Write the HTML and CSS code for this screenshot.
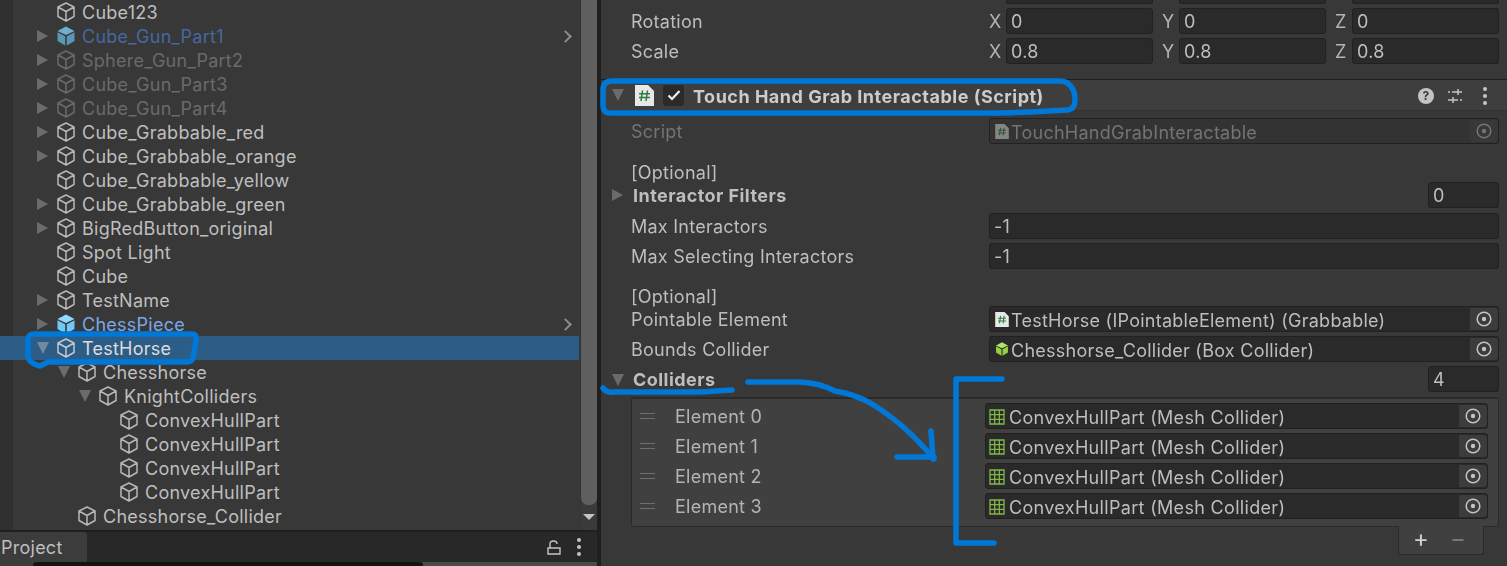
FILE: index.html

```html
<!DOCTYPE html>
<html lang="en">
<head>
  <meta charset="UTF-8">
  <title>Hierarchy and Inspector</title>
  <link rel="stylesheet" href="styles.css">
</head>
<body>
  <svg class="defs" width="0" height="0">
    <symbol id="cube" viewBox="0 0 20 20">
      <path d="M10 1 L18 5 V14.5 L10 19 L2 14.5 V5 Z M2 5 L10 9.5 L18 5 M10 9.5 V19" fill="none" stroke="currentColor" stroke-width="1.5" stroke-linejoin="round"/>
    </symbol>
    <symbol id="cube-solid" viewBox="0 0 20 20">
      <path d="M10 .5 L18.5 5 L10 9 L1.5 5 Z" fill="var(--top)"/>
      <path d="M1.5 6.2 L9.2 10.2 V19.5 L1.5 15 Z M18.5 6.2 L10.8 10.2 V19.5 L18.5 15 Z" fill="var(--side)"/>
    </symbol>
    <symbol id="target" viewBox="0 0 16 16">
      <circle cx="8" cy="8" r="6.8" fill="none" stroke="currentColor" stroke-width="1.5"/>
      <circle cx="8" cy="8" r="2.2" fill="currentColor"/>
    </symbol>
    <symbol id="mesh" viewBox="0 0 16 16">
      <path d="M1 1 H15 V15 H1 Z M1 5.7 H15 M1 10.3 H15 M5.7 1 V15 M10.3 1 V15" fill="none" stroke="#82b84a" stroke-width="1.3"/>
    </symbol>
    <symbol id="script" viewBox="0 0 19 21">
      <path d="M0 0 H13 L19 6 V21 H0 Z" fill="#e8e8e8"/>
      <path d="M7.5 5.5 L6 16 M12.5 5.5 L11 16 M4 8.8 H15 M4 12.6 H15" fill="none" stroke="#2e7d3c" stroke-width="1.5"/>
    </symbol>
  </svg>

  <div class="screen">
    <section class="left">
      <div class="hierarchy">
        <div class="tree">
          <div class="row"><i class="arrow none"></i><svg class="cube"><use href="#cube"/></svg><span>Cube123</span></div>
          <div class="row prefab-dim"><i class="arrow"></i><svg class="cube gun"><use href="#cube-solid"/></svg><span>Cube_Gun_Part1</span><b class="chev"></b></div>
          <div class="row off"><i class="arrow"></i><svg class="cube"><use href="#cube"/></svg><span>Sphere_Gun_Part2</span></div>
          <div class="row off"><i class="arrow"></i><svg class="cube"><use href="#cube"/></svg><span>Cube_Gun_Part3</span></div>
          <div class="row off"><i class="arrow"></i><svg class="cube"><use href="#cube"/></svg><span>Cube_Gun_Part4</span></div>
          <div class="row"><i class="arrow"></i><svg class="cube"><use href="#cube"/></svg><span>Cube_Grabbable_red</span></div>
          <div class="row"><i class="arrow"></i><svg class="cube"><use href="#cube"/></svg><span>Cube_Grabbable_orange</span></div>
          <div class="row"><i class="arrow none"></i><svg class="cube"><use href="#cube"/></svg><span>Cube_Grabbable_yellow</span></div>
          <div class="row"><i class="arrow"></i><svg class="cube"><use href="#cube"/></svg><span>Cube_Grabbable_green</span></div>
          <div class="row"><i class="arrow"></i><svg class="cube"><use href="#cube"/></svg><span>BigRedButton_original</span></div>
          <div class="row"><i class="arrow none"></i><svg class="cube"><use href="#cube"/></svg><span>Spot Light</span></div>
          <div class="row"><i class="arrow none"></i><svg class="cube"><use href="#cube"/></svg><span>Cube</span></div>
          <div class="row"><i class="arrow"></i><svg class="cube"><use href="#cube"/></svg><span>TestName</span></div>
          <div class="row prefab"><i class="arrow"></i><svg class="cube chess"><use href="#cube-solid"/></svg><span>ChessPiece</span><b class="chev"></b></div>
          <div class="row selected"><i class="arrow open"></i><svg class="cube"><use href="#cube"/></svg><span>TestHorse</span></div>
          <div class="row lvl1"><i class="arrow open"></i><svg class="cube"><use href="#cube"/></svg><span>Chesshorse</span></div>
          <div class="row lvl2"><i class="arrow open"></i><svg class="cube"><use href="#cube"/></svg><span>KnightColliders</span></div>
          <div class="row lvl3"><i class="arrow none"></i><svg class="cube"><use href="#cube"/></svg><span>ConvexHullPart</span></div>
          <div class="row lvl3"><i class="arrow none"></i><svg class="cube"><use href="#cube"/></svg><span>ConvexHullPart</span></div>
          <div class="row lvl3"><i class="arrow none"></i><svg class="cube"><use href="#cube"/></svg><span>ConvexHullPart</span></div>
          <div class="row lvl3"><i class="arrow none"></i><svg class="cube"><use href="#cube"/></svg><span>ConvexHullPart</span></div>
          <div class="row lvl1"><i class="arrow none"></i><svg class="cube"><use href="#cube"/></svg><span>Chesshorse_Collider</span></div>
        </div>
        <div class="scrollbar">
          <div class="thumb"></div>
          <div class="down"></div>
        </div>
      </div>
      <div class="project-bar">
        <div class="tab">Project</div>
        <div class="tab-tools">
          <svg class="lock" viewBox="0 0 14 15"><path d="M1 8 H13 V14 H1 Z M3 8 V4 Q3 1 6.5 1 Q10 1 10 4" fill="none" stroke="#c4c4c4" stroke-width="1.4"/></svg>
          <div class="dots small"><i></i><i></i><i></i></div>
        </div>
      </div>
      <div class="project-strip"><i></i><b></b></div>
    </section>

    <section class="inspector">
      <div class="xyz stub">
        <div class="axis"><em></em><div class="input"></div></div>
        <div class="axis"><em></em><div class="input"></div></div>
        <div class="axis"><em></em><div class="input"></div></div>
      </div>
      <div class="prop">
        <label>Rotation</label>
        <div class="xyz">
          <div class="axis"><em>X</em><div class="input">0</div></div>
          <div class="axis"><em>Y</em><div class="input">0</div></div>
          <div class="axis"><em>Z</em><div class="input">0</div></div>
        </div>
      </div>
      <div class="prop">
        <label>Scale</label>
        <div class="xyz">
          <div class="axis"><em>X</em><div class="input">0.8</div></div>
          <div class="axis"><em>Y</em><div class="input">0.8</div></div>
          <div class="axis"><em>Z</em><div class="input">0.8</div></div>
        </div>
      </div>

      <header class="comp-head">
        <i class="arrow open"></i>
        <svg class="script-icon"><use href="#script"/></svg>
        <div class="check"><svg viewBox="0 0 14 12"><path d="M1.5 6.5 L5 10 L12.5 2" fill="none" stroke="#f0f0f0" stroke-width="2.2"/></svg></div>
        <h2>Touch Hand Grab Interactable (Script)</h2>
        <div class="head-tools">
          <span class="help">?</span>
          <svg class="sliders" viewBox="0 0 16 16"><path d="M5 4 H15 M1 4 H3 M11 1 V7 M1 12 H11 M13 12 H15 M6 9 V15" fill="none" stroke="#c4c4c4" stroke-width="1.5"/></svg>
          <div class="dots"><i></i><i></i><i></i></div>
        </div>
      </header>

      <div class="prop script-row dim">
        <label>Script</label>
        <div class="field">
          <svg class="tiny dimmed"><use href="#script"/></svg><span>TouchHandGrabInteractable</span>
          <div class="pick"><svg><use href="#target"/></svg></div>
        </div>
      </div>

      <div class="note">[Optional]</div>
      <div class="prop first">
        <label class="bold"><i class="arrow"></i>Interactor Filters</label>
        <div class="input count">0</div>
      </div>
      <div class="prop near">
        <label>Max Interactors</label>
        <div class="input wide">-1</div>
      </div>
      <div class="prop">
        <label>Max Selecting Interactors</label>
        <div class="input wide">-1</div>
      </div>

      <div class="note second">[Optional]</div>
      <div class="prop first">
        <label>Pointable Element</label>
        <div class="field">
          <svg class="tiny"><use href="#script"/></svg><span>TestHorse (IPointableElement) (Grabbable)</span>
          <div class="pick"><svg><use href="#target"/></svg></div>
        </div>
      </div>
      <div class="prop">
        <label>Bounds Collider</label>
        <div class="field">
          <svg class="tiny box"><use href="#cube-solid"/></svg><span>Chesshorse_Collider (Box Collider)</span>
          <div class="pick"><svg><use href="#target"/></svg></div>
        </div>
      </div>
      <div class="prop">
        <label class="bold"><i class="arrow open"></i>Colliders</label>
        <div class="input count">4</div>
      </div>

      <div class="list">
        <div class="element">
          <div class="handle"></div><label>Element 0</label>
          <div class="field"><svg class="tiny mesh"><use href="#mesh"/></svg><span>ConvexHullPart (Mesh Collider)</span><div class="pick"><svg><use href="#target"/></svg></div></div>
        </div>
        <div class="element">
          <div class="handle"></div><label>Element 1</label>
          <div class="field"><svg class="tiny mesh"><use href="#mesh"/></svg><span>ConvexHullPart (Mesh Collider)</span><div class="pick"><svg><use href="#target"/></svg></div></div>
        </div>
        <div class="element">
          <div class="handle"></div><label>Element 2</label>
          <div class="field"><svg class="tiny mesh"><use href="#mesh"/></svg><span>ConvexHullPart (Mesh Collider)</span><div class="pick"><svg><use href="#target"/></svg></div></div>
        </div>
        <div class="element">
          <div class="handle"></div><label>Element 3</label>
          <div class="field"><svg class="tiny mesh"><use href="#mesh"/></svg><span>ConvexHullPart (Mesh Collider)</span><div class="pick"><svg><use href="#target"/></svg></div></div>
        </div>
      </div>
      <div class="list-foot"><span>+</span><span class="minus">−</span></div>
    </section>
  </div>

  <!-- hand drawn marks on top of the screenshot -->
  <svg class="marks" viewBox="0 0 1507 566">
    <g fill="none" stroke="#0078d7" stroke-width="5.5" stroke-linecap="round" stroke-linejoin="round">
      <path d="M610 113 H1000 L1030 112 L1068 110 Q1075 109 1075 100 Q1075 92 1072 88 Q1068 81 1060 81 H612 Q603 81 603 90 V106 Q603 113 610 113 Z"/>
      <path d="M34 334 H192 Q197 334 196 340 L193 358 Q192 362 186 362 H48 L40 366 Q28 363 28 355 V340 Q28 334 34 334 Z"/>
      <path d="M603 388 Q606 393 615 392 H700 L732 390"/>
      <path d="M748 382 H800 Q820 383 835 391 Q855 394 872 404 Q905 424 934 459"/>
      <path d="M931 431 L933 459 M897 457 H934"/>
      <path d="M1002 379 H956 V543 H994"/>
    </g>
  </svg>
</body>
</html>
```

FILE: styles.css

```css
* { box-sizing: border-box; }
html, body { margin: 0; height: 100%; overflow: hidden; }
body { background: #383838; color: #bebebe; font-family: Inter, "Liberation Sans", sans-serif; font-size: 18px; letter-spacing: .25px; }
.defs { position: absolute; }
.screen { display: flex; height: 566px; filter: blur(.35px); }

/* left side: hierarchy + project tab */
.left { width: 601px; display: flex; flex-direction: column; border-right: 4px solid #1f1f1f; }
.hierarchy { height: 530px; display: flex; background: #383838; overflow: hidden; }
.tree { flex: 1; background: linear-gradient(90deg, #303030 13px, #383838 13px); }
.row { height: 24px; display: flex; align-items: center; padding-left: 37px; position: relative; white-space: nowrap; }
.row span { margin-left: 6px; }
.lvl1 { padding-left: 58px; }
.lvl2 { padding-left: 79px; }
.lvl3 { padding-left: 100px; }
.cube { width: 20px; height: 20px; margin-left: 7px; color: #b8b8b8; }
.off { color: #6a6a6a; }
.off .cube { color: #6a6a6a; }
.prefab-dim span { color: #46689f; }
.prefab span { color: #7ca7e6; }
.gun { --top: #6fb0cf; --side: #5b97b5; }
.chess { --top: #8fdcff; --side: #70c8f4; }
.selected { background: #2c5d87; color: #dcdcdc; margin-right: 1px; }
.selected .cube { color: #c4c8cc; }
.selected .arrow.open { border-top-color: #6f8ba3; }
.chev { position: absolute; right: 10px; top: 8px; width: 9px; height: 9px; border-top: 2px solid #8c8c8c; border-right: 2px solid #8c8c8c; transform: rotate(45deg); }

.arrow { display: inline-block; width: 12px; height: 12px; flex: none; border-left: 11px solid #6b6b6b; border-top: 6px solid transparent; border-bottom: 6px solid transparent; }
.arrow.none { border: 0; }
.arrow.open { border-left: 6px solid transparent; border-right: 6px solid transparent; border-top: 12px solid #6b6b6b; border-bottom: 0; }

.scrollbar { width: 17px; background: #3a3a3a; border-left: 1px solid #333; position: relative; }
.thumb { width: 16px; height: 505px; background: #5f5f5f; border-radius: 0 0 7px 7px; }
.down { position: absolute; left: 2px; top: 514px; width: 0; height: 0; border-left: 6px solid transparent; border-right: 6px solid transparent; border-top: 6px solid #c4c4c4; }

.project-bar { height: 32px; display: flex; justify-content: space-between; align-items: center; background: #282828; border-top: 2px solid #1f1f1f; }
.tab { width: 87px; height: 100%; background: #3c3c3c; padding-left: 1px; line-height: 32px; border-radius: 0 3px 0 0; }
.tab-tools { display: flex; align-items: center; gap: 16px; padding-right: 16px; }
.lock { width: 14px; height: 15px; }
.project-strip { height: 4px; background: #4a4a4a; display: flex; }
.project-strip i { width: 33px; background: #3c3c3c; }
.project-strip b { width: 390px; background: #141414; border-radius: 3px 3px 0 0; }
.dots { display: flex; flex-direction: column; gap: 3px; }
.dots i { width: 4px; height: 4px; border-radius: 50%; background: #c4c4c4; }

/* inspector */
.inspector { flex: 1; min-width: 0; display: flex; flex-direction: column; padding-right: 8px; }
.xyz { display: flex; gap: 9px; width: 510px; }
.xyz.stub { height: 4px; align-self: flex-end; overflow: hidden; }
.axis { flex: 1; display: flex; align-items: center; }
.axis em { width: 17px; flex: none; font-style: normal; color: #b4b4b4; }
.input { flex: 1; height: 26px; line-height: 25px; padding-left: 4px; background: #2a2a2a; border: 1px solid #212121; border-radius: 3px; }
.stub .axis { height: 4px; align-items: flex-start; }
.stub .input { height: 4px; border-top: 0; border-radius: 0 0 3px 3px; }

.prop { height: 26px; margin-top: 4px; padding-left: 30px; display: flex; justify-content: space-between; align-items: center; }
.prop label { white-space: nowrap; padding-top: 1px; }
.prop .input.wide { flex: none; width: 510px; }
.prop .input.count { flex: none; width: 71px; }
.prop.near { margin-top: 5px; }
.prop.first { margin-top: 0; }
label.bold { font-weight: 700; letter-spacing: .45px; position: relative; padding-left: 2px; }
label.bold .arrow { position: absolute; left: -19px; top: 5px; }
label.bold .arrow.open { top: 6px; }

.comp-head { height: 32px; margin-top: 15px; display: flex; align-items: center; padding-left: 11px; background: #3e3e3e; border-top: 1px solid #1f1f1f; margin-right: -8px; border-bottom: 1px solid #333; }
.script-icon { width: 19px; height: 21px; margin-left: 11px; }
.check { width: 21px; height: 21px; margin-left: 9px; background: #2a2a2a; border-radius: 3px; display: flex; align-items: center; justify-content: center; }
.check svg { width: 14px; height: 12px; }
.comp-head h2 { margin: 2px 0 0 9px; font-size: 18px; font-weight: 700; letter-spacing: .5px; color: #cccccc; }
.head-tools { margin-left: auto; margin-top: 2px; padding-right: 20px; display: flex; align-items: center; gap: 13px; }
.help { width: 16px; height: 16px; border-radius: 50%; background: #c4c4c4; color: #383838; font-size: 12px; font-weight: 700; line-height: 16px; text-align: center; }
.sliders { width: 16px; height: 16px; margin-right: 7px; }

.script-row { margin-top: 7px; }
.dim label, .dim .field span { color: #747474; }
.dim .field { background: #333; }
.dim .pick { color: #747474; background: #383838; }
.dimmed { opacity: .45; }
.note { height: 19px; margin-top: 19px; padding-left: 30px; line-height: 19px; }
.note.second { margin-top: 18px; }

.field { position: relative; flex: none; width: 510px; height: 26px; display: flex; align-items: center; gap: 2px; padding-left: 5px; background: #2a2a2a; border: 1px solid #212121; border-radius: 3px; white-space: nowrap; }
.field span { padding-top: 3px; }
.tiny { width: 14px; height: 15px; flex: none; }
.box { --top: #b5e36a; --side: #94d03f; height: 16px; }
.mesh { width: 16px; height: 16px; margin-top: 2px; }
.pick { position: absolute; right: 0; top: 1px; bottom: 1px; width: 28px; background: #3c3c3c; color: #c4c4c4; display: flex; align-items: center; justify-content: center; border-radius: 0 3px 3px 0; }
.pick svg { width: 16px; height: 16px; }

.list { margin: 5px 0 0 30px; height: 130px; padding: 4px 10px 0 8px; background: #404040; border: 1px solid #2a2a2a; border-top: 2px solid #2a2a2a; border-radius: 3px; display: flex; flex-direction: column; gap: 4px; }
.element { height: 26px; display: flex; align-items: center; }
.handle { width: 15px; height: 6px; border-top: 1px solid #6e6e6e; border-bottom: 1px solid #6e6e6e; }
.element label { margin-left: 20px; flex: 1; padding-top: 1px; color: #b4b4b4; }
.element .field { width: 503px; padding-left: 3px; gap: 4px; letter-spacing: .32px; }
.list-foot { align-self: flex-end; width: 86px; height: 29px; margin-top: -1px; margin-right: 15px; padding: 0 0 3px 12px; background: #404040; border: 1px solid #2a2a2a; border-top: 0; border-radius: 0 0 3px 3px; display: flex; align-items: center; gap: 17px; font-size: 24px; color: #d0d0d0; }
.list-foot span { width: 20px; text-align: center; }
.minus { color: #777; }

.marks { position: absolute; left: 0; top: 0; width: 1507px; height: 566px; pointer-events: none; filter: blur(.35px); }
```
